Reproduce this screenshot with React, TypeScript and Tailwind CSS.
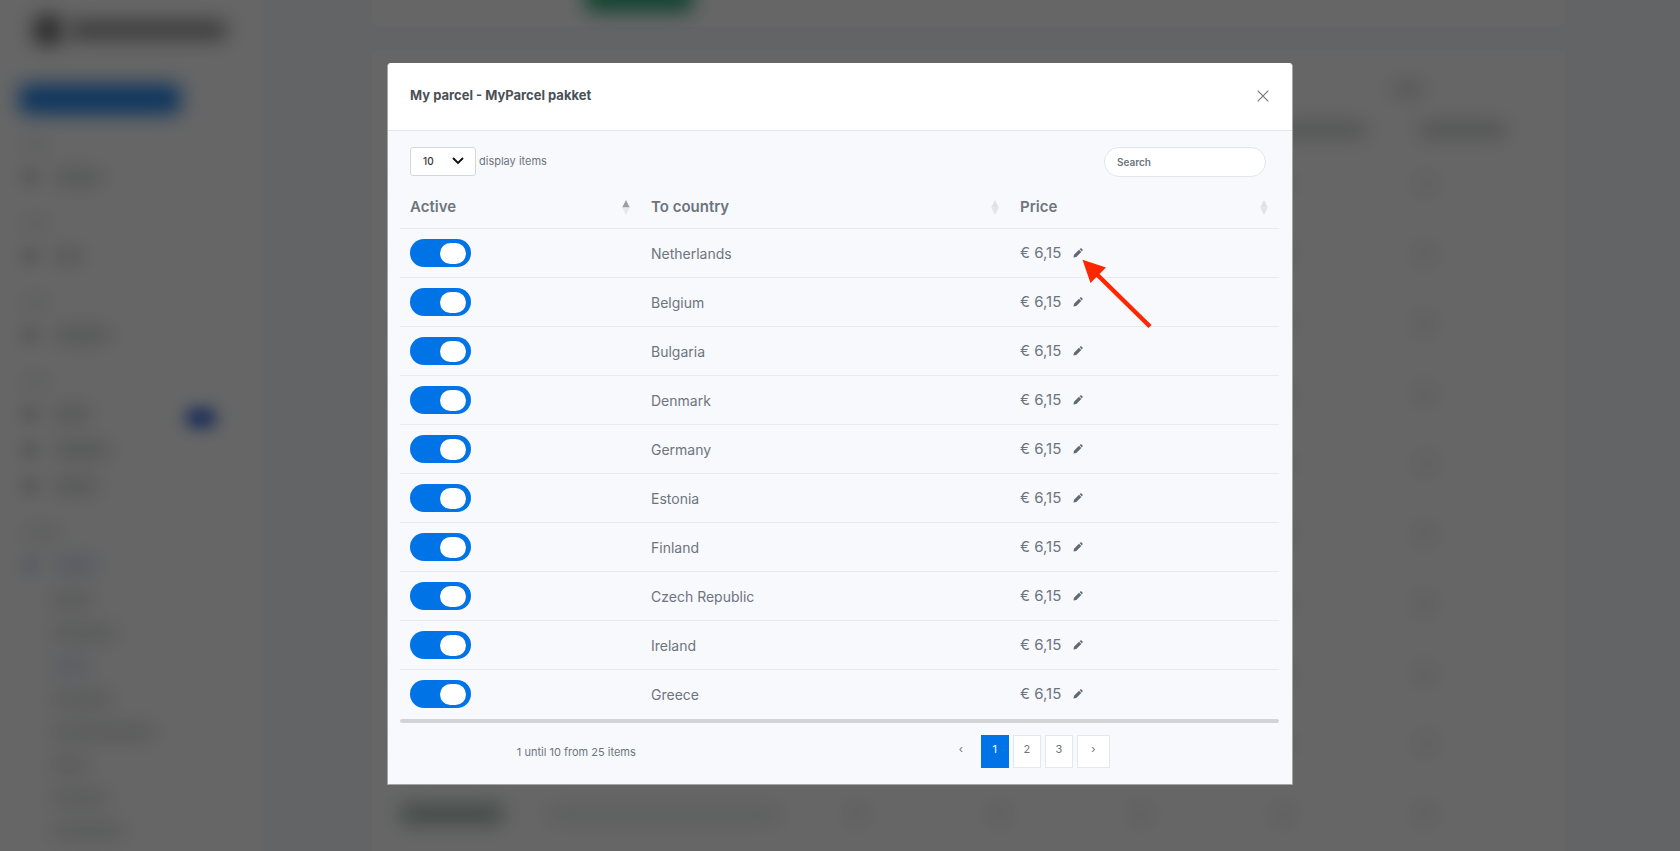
import { useState } from "react";

const countries = [
  "Netherlands",
  "Belgium",
  "Bulgaria",
  "Denmark",
  "Germany",
  "Estonia",
  "Finland",
  "Czech Republic",
  "Ireland",
  "Greece",
];

function NavLabel({ width = "w-6" }: { width?: string }) {
  return (
    <div className="flex h-7 items-center pl-6">
      <span className={`h-3 rounded-full bg-[#e2e4e4] blur-[10px] ${width}`} />
    </div>
  );
}

function NavItem({
  width,
  active = false,
  badge = false,
}: {
  width: string;
  active?: boolean;
  badge?: boolean;
}) {
  const tone = active ? "bg-[#c9d6f3]" : "bg-[#c9cccb]";
  return (
    <div className="flex h-9 items-center pl-[22px]">
      <span className={`size-4 shrink-0 rounded-full blur-[8px] ${tone}`} />
      <span className={`ml-4 h-3 shrink-0 rounded-full blur-[10px] ${tone} ${width}`} />
      {badge && (
        <span className="mt-2 mr-[45px] ml-auto h-5 w-8 rounded-full bg-[#3f6fdc] blur-[8px]" />
      )}
    </div>
  );
}

function NavSubItem({ width, active = false }: { width: string; active?: boolean }) {
  return (
    <div className="flex h-[33px] items-center pl-[52px]">
      <span
        className={`h-3 rounded-full blur-[10px] ${active ? "bg-[#d3ddf4]" : "bg-[#d3d6d5]"} ${width}`}
      />
    </div>
  );
}

function Sidebar() {
  return (
    <aside className="w-[262px] shrink-0 bg-white">
      <div className="flex h-[60px] items-center pl-8">
        <span className="size-8 rounded-full bg-[#6c6c6c] blur-[10px]" />
        <span className="ml-1 h-[18px] w-40 rounded-full bg-[#8c8c8c] blur-[10px]" />
      </div>
      <div className="h-[71px] pt-6 pl-[19px]">
        <div className="h-[30px] w-[162px] rounded-lg bg-[#2184ea] blur-[10px]" />
      </div>
      <div className="flex flex-col gap-[15px]">
        <div>
          <NavLabel />
          <NavItem width="w-12" />
        </div>
        <div>
          <NavLabel />
          <NavItem width="w-7" />
        </div>
        <div>
          <NavLabel />
          <NavItem width="w-14" />
        </div>
        <div>
          <NavLabel />
          <NavItem width="w-9" badge />
          <NavItem width="w-14" />
          <NavItem width="w-11" />
        </div>
        <div>
          <NavLabel width="w-9" />
          <NavItem width="w-11" active />
          <NavSubItem width="w-10" />
          <NavSubItem width="w-16" />
          <NavSubItem width="w-10" active />
          <NavSubItem width="w-15" />
          <NavSubItem width="w-26" />
          <NavSubItem width="w-9" />
          <NavSubItem width="w-14" />
          <NavSubItem width="w-18" />
        </div>
      </div>
    </aside>
  );
}

function BackgroundPage() {
  return (
    <div aria-hidden="true" className="flex h-full bg-[#f6faff]">
      <Sidebar />
      <div className="flex min-w-0 flex-1 flex-col gap-6 pr-[115px] pl-[110px]">
        <div className="h-[27px] shrink-0 rounded-b-lg bg-white pl-[213px]">
          <div className="-mt-5 h-8 w-[108px] rounded-lg bg-[#2fa77c] blur-[10px]" />
        </div>
        <div className="flex-1 bg-white pl-7">
          <div className="flex h-[68px] items-center justify-end pt-2 pr-[141px]">
            <span className="h-3.5 w-8 rounded-full bg-[#cfd2d1] blur-[10px]" />
          </div>
          <div className="flex h-[30px] justify-end gap-[52px] pt-1 pr-[58px]">
            <span className="h-3.5 w-[90px] rounded-full bg-[#c6c9c8] blur-[10px]" />
            <span className="h-3.5 w-[88px] rounded-full bg-[#c6c9c8] blur-[10px]" />
          </div>
          {countries.map((country) => (
            <div
              key={country}
              className="grid h-[70px] grid-cols-[145px_241px_repeat(5,142px)] items-center"
            >
              <span className="h-5 w-[104px] rounded-lg bg-[#a3b8b1] blur-[10px]" />
              <span className="h-3.5 w-[236px] rounded-full bg-[#e6e8e8] blur-[10px]" />
              {["a", "b", "c", "d", "e"].map((cell) => (
                <span
                  key={cell}
                  className="size-5 justify-self-center rounded-full bg-[#e6e8e7] blur-[10px]"
                />
              ))}
            </div>
          ))}
        </div>
      </div>
    </div>
  );
}

function SortIcon({ ascending = false }: { ascending?: boolean }) {
  return (
    <svg width="8" height="15" viewBox="0 0 8 15" aria-hidden="true">
      <path d="M4 0 7.8 7.4H.2z" fill={ascending ? "#9a9fa5" : "#dfe1e5"} />
      <path d="M4 15 .2 7.6h7.6z" fill={ascending ? "#e6e8ea" : "#e2e4e8"} />
    </svg>
  );
}

function HeaderCell({
  label,
  width,
  ascending,
}: {
  label: string;
  width: string;
  ascending?: boolean;
}) {
  return (
    <th
      scope="col"
      aria-sort={ascending ? "ascending" : "none"}
      className={`border-b border-[#e6ebf0] p-0 ${width}`}
    >
      <button
        type="button"
        className="flex h-[43px] w-full items-center justify-between pt-0.5 pr-[11px] pl-2.5 text-left text-[15px] font-semibold text-[#6c757d]"
      >
        {label}
        <SortIcon ascending={ascending} />
      </button>
    </th>
  );
}

function PriceRow({ country }: { country: string }) {
  const [active, setActive] = useState(true);
  return (
    <tr className="h-[49px] border-b border-[#e6ebf0] last:border-b-0">
      <td className="px-2.5">
        <input
          type="checkbox"
          role="switch"
          aria-label={`${country} active`}
          checked={active}
          onChange={(event) => setActive(event.target.checked)}
          className="flex h-7 w-[61px] cursor-pointer appearance-none items-center rounded-full bg-[#adb5bd] px-[5px] before:h-[21px] before:w-[26px] before:rounded-full before:bg-white checked:justify-end checked:bg-[#0073e6]"
        />
      </td>
      <td className="px-2.5 text-[14px]">{country}</td>
      <td className="px-2.5 text-[15px]">
        <div className="flex items-center gap-3">
          <span>€ 6,15</span>
          <button type="button" aria-label={`Edit price for ${country}`}>
            <svg width="10" height="10" viewBox="0 0 10 10" fill="#5f6a74" aria-hidden="true">
              <path d="M.5 9.500 1 6.700 6 1.700 8.300 4l-5 5z" />
              <path d="M6.600 1.100 7.400.4Q8 0 8.600.5l.9.9q.5.6 0 1.200l-.7.8z" />
            </svg>
          </button>
        </div>
      </td>
    </tr>
  );
}

function Pagination() {
  const box = "h-[33px] border pb-1 text-[11px]";
  const plain = "border-[#e3e8ee] bg-white text-[#6c757d]";
  return (
    <nav aria-label="Pages" className="flex gap-1">
      <button
        type="button"
        aria-label="Previous page"
        className={`${box} w-8 border-transparent text-[#6c757d]`}
      >
        ‹
      </button>
      <button
        type="button"
        aria-current="page"
        className={`${box} w-7 border-[#0073e6] bg-[#0073e6] text-white`}
      >
        1
      </button>
      <button type="button" className={`${box} ${plain} w-7`}>
        2
      </button>
      <button type="button" className={`${box} ${plain} w-7`}>
        3
      </button>
      <button type="button" aria-label="Next page" className={`${box} ${plain} w-[33px]`}>
        ›
      </button>
    </nav>
  );
}

function ShippingDialog() {
  return (
    <div
      role="dialog"
      aria-modal="true"
      aria-labelledby="dialog-title"
      className="relative w-full max-w-[906px] rounded-t border-x border-b border-[#a4a5a7] bg-[#f8f9fd] text-[#6c757d]"
    >
      <header className="flex h-[68px] items-center justify-between rounded-t border-b border-[#e3e8ee] bg-white pr-[23px] pb-0.5 pl-[22px]">
        <h1 id="dialog-title" className="text-[13px] font-bold text-[#495057]">
          My parcel - MyParcel pakket
        </h1>
        <button type="button" aria-label="Close">
          <svg width="12" height="12" viewBox="0 0 12 12" stroke="#77797c" strokeWidth="1.2" aria-hidden="true">
            <path d="M.7.7l10.600 10.600M11.300.7.7 11.300" />
          </svg>
        </button>
      </header>

      <div className="flex items-start justify-between pt-4 pr-[26px] pl-[22px]">
        <label className="flex items-center gap-[3px] text-[11px]">
          <span className="relative">
            <select
              defaultValue="10"
              className="h-[29px] w-[66px] appearance-none rounded-[3px] border border-[#d3d8df] bg-white pl-3 text-[10px] font-medium text-[#343a40]"
            >
              <option>10</option>
              <option>25</option>
              <option>50</option>
            </select>
            <svg
              className="pointer-events-none absolute top-2.5 right-3"
              width="12"
              height="8"
              viewBox="0 0 12 8"
              fill="none"
              stroke="#0b0d10"
              strokeWidth="1.8"
              aria-hidden="true"
            >
              <path d="M1 1l5 5 5-5" />
            </svg>
          </span>
          display items
        </label>
        <input
          type="search"
          aria-label="Search"
          placeholder="Search"
          className="h-[30px] w-[162px] rounded-full border border-[#e0e6ec] bg-white px-3 text-[10px] font-semibold placeholder:text-[#6c757d]"
        />
      </div>

      <div className="pt-2 pr-[13px] pl-3">
        <table className="w-full table-fixed border-collapse text-left">
          <thead>
            <tr>
              <HeaderCell label="Active" width="w-[241px]" ascending />
              <HeaderCell label="To country" width="w-[369px]" />
              <HeaderCell label="Price" width="" />
            </tr>
          </thead>
          <tbody>
            {countries.map((country) => (
              <PriceRow key={country} country={country} />
            ))}
          </tbody>
        </table>
        <div className="h-1 rounded-full bg-[#d3d4d6]" />
      </div>

      <footer className="grid grid-cols-12 pt-3 pb-4 text-[11px]">
        <p className="col-span-5 flex items-center justify-center pt-0.5">
          1 until 10 from 25 items
        </p>
        <div className="col-span-7 flex justify-center pr-0.5">
          <Pagination />
        </div>
      </footer>

      <svg
        className="pointer-events-none absolute top-[196px] left-[694px]"
        width="72"
        height="70"
        viewBox="0 0 72 70"
        fill="#ff2600"
        aria-hidden="true"
      >
        <path d="M.5.8 24 8.500 8.500 24z" />
        <path d="M14 14.500 68 67.500" stroke="#ff2600" strokeWidth="4.4" />
      </svg>
    </div>
  );
}

export default function App() {
  return (
    <div className="relative h-screen overflow-hidden bg-white font-['Inter',sans-serif]">
      <BackgroundPage />
      <div className="absolute inset-0 flex items-start justify-center overflow-hidden bg-black/60 pt-[63px]">
        <ShippingDialog />
      </div>
    </div>
  );
}
